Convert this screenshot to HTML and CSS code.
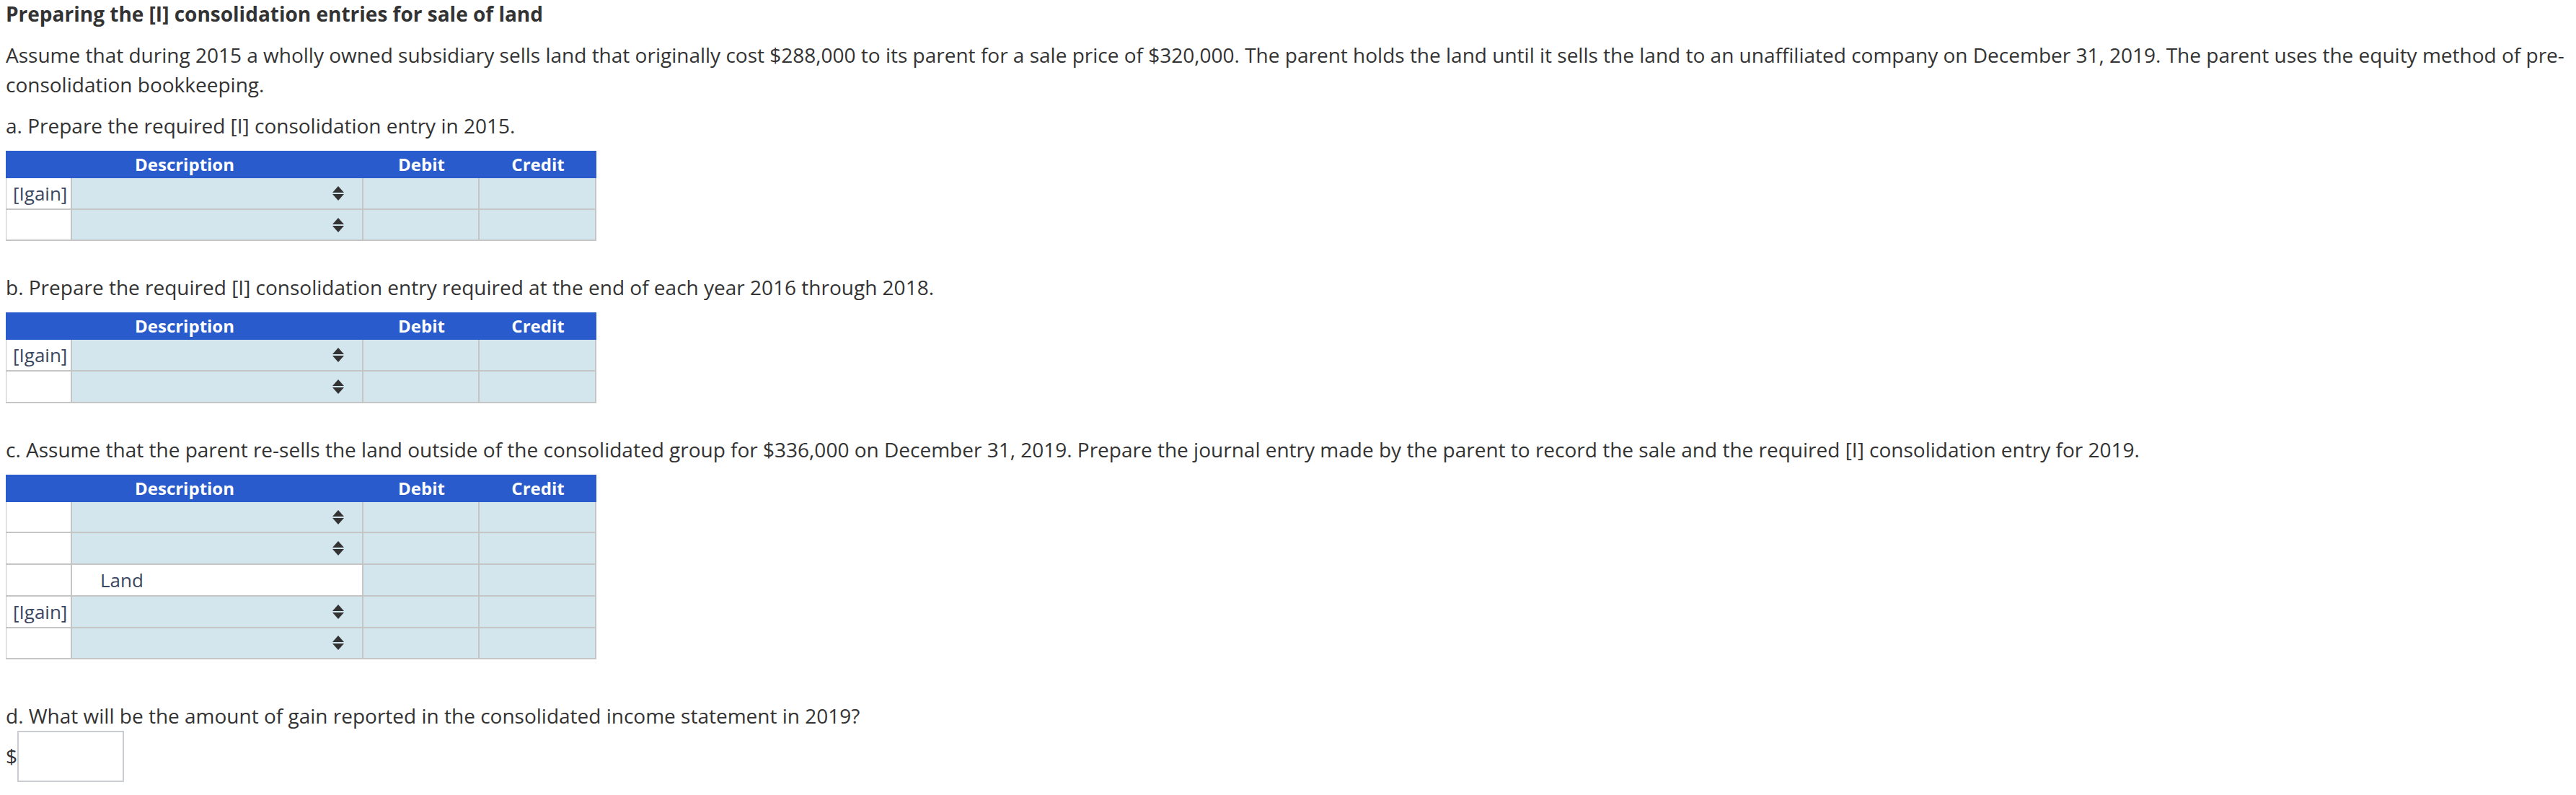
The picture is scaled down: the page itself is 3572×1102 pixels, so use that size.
FILE: index.html
```html
<!DOCTYPE html>
<html lang="en">
<head>
<meta charset="utf-8">
<title>Preparing the [I] consolidation entries for sale of land</title>
<link rel="stylesheet" href="styles.css">
</head>
<body>
<div class="page">
  <h1 class="title">Preparing the [I] consolidation entries for sale of land</h1>
  <p class="intro">Assume that during 2015 a wholly owned subsidiary sells land that originally cost $288,000 to its parent for a sale price of $320,000. The parent holds the land until it sells the land to an unaffiliated company on December 31, 2019. The parent uses the equity method of pre-consolidation bookkeeping.</p>

  <p class="q q-a">a. Prepare the required [I] consolidation entry in 2015.</p>
  <div class="journal" role="table">
    <div class="hd hd-desc">Description</div><div class="hd">Debit</div><div class="hd">Credit</div>
    <div class="cell tag">[Igain]</div><div class="cell desc"><svg class="arrows" viewBox="0 0 16 20" width="16" height="20"><polygon points="8,0 16,9 0,9"/><polygon points="0,11 16,11 8,20"/></svg></div><div class="cell num"></div><div class="cell num"></div>
    <div class="cell tag"></div><div class="cell desc"><svg class="arrows" viewBox="0 0 16 20" width="16" height="20"><polygon points="8,0 16,9 0,9"/><polygon points="0,11 16,11 8,20"/></svg></div><div class="cell num"></div><div class="cell num"></div>
  </div>

  <p class="q q-b">b. Prepare the required [I] consolidation entry required at the end of each year 2016 through 2018.</p>
  <div class="journal" role="table">
    <div class="hd hd-desc">Description</div><div class="hd">Debit</div><div class="hd">Credit</div>
    <div class="cell tag">[Igain]</div><div class="cell desc"><svg class="arrows" viewBox="0 0 16 20" width="16" height="20"><polygon points="8,0 16,9 0,9"/><polygon points="0,11 16,11 8,20"/></svg></div><div class="cell num"></div><div class="cell num"></div>
    <div class="cell tag"></div><div class="cell desc"><svg class="arrows" viewBox="0 0 16 20" width="16" height="20"><polygon points="8,0 16,9 0,9"/><polygon points="0,11 16,11 8,20"/></svg></div><div class="cell num"></div><div class="cell num"></div>
  </div>

  <p class="q q-c">c. Assume that the parent re-sells the land outside of the consolidated group for $336,000 on December 31, 2019. Prepare the journal entry made by the parent to record the sale and the required [I] consolidation entry for 2019.</p>
  <div class="journal" role="table">
    <div class="hd hd-desc">Description</div><div class="hd">Debit</div><div class="hd">Credit</div>
    <div class="cell tag"></div><div class="cell desc"><svg class="arrows" viewBox="0 0 16 20" width="16" height="20"><polygon points="8,0 16,9 0,9"/><polygon points="0,11 16,11 8,20"/></svg></div><div class="cell num"></div><div class="cell num"></div>
    <div class="cell tag"></div><div class="cell desc"><svg class="arrows" viewBox="0 0 16 20" width="16" height="20"><polygon points="8,0 16,9 0,9"/><polygon points="0,11 16,11 8,20"/></svg></div><div class="cell num"></div><div class="cell num"></div>
    <div class="cell tag"></div><div class="cell desc fixed">Land</div><div class="cell num"></div><div class="cell num"></div>
    <div class="cell tag">[Igain]</div><div class="cell desc"><svg class="arrows" viewBox="0 0 16 20" width="16" height="20"><polygon points="8,0 16,9 0,9"/><polygon points="0,11 16,11 8,20"/></svg></div><div class="cell num"></div><div class="cell num"></div>
    <div class="cell tag"></div><div class="cell desc"><svg class="arrows" viewBox="0 0 16 20" width="16" height="20"><polygon points="8,0 16,9 0,9"/><polygon points="0,11 16,11 8,20"/></svg></div><div class="cell num"></div><div class="cell num"></div>
  </div>

  <p class="q q-d">d. What will be the amount of gain reported in the consolidated income statement in 2019?</p>
  <div class="answer"><span class="dollar">$</span><span class="box"></span></div>
</div>
</body>
</html>
```
FILE: styles.css
```css
html, body {
  margin: 0;
  padding: 0;
  background: #ffffff;
}
body {
  font-family: "Open Sans", "Noto Sans", sans-serif;
  color: #333333;
  font-size: 28px;
}
.page {
  padding: 0 8px;
}
.title {
  margin: 0;
  font-size: 28px;
  font-weight: 700;
  line-height: 38px;
  color: #333333;
}
.intro {
  margin: 18px 0 0;
  line-height: 41px;
}
.q {
  margin: 0;
  line-height: 41px;
}
.q-a { margin-top: 16px; }
.q-b { margin-top: 44px; }
.q-c { margin-top: 44px; }
.q-d { margin-top: 58px; }

.journal {
  display: grid;
  grid-template-columns: 92px 404px 161px 162px;
  grid-auto-rows: 43.7px;
  grid-template-rows: 38px;
  width: 819px;
  margin-top: 14px;
}
.hd {
  background: #2a5bcc;
  color: #ffffff;
  font-weight: 700;
  font-size: 24px;
  line-height: 38px;
  height: 38px;
  text-align: center;
}
.hd-desc {
  grid-column: span 2;
}
.cell {
  box-sizing: border-box;
  background: #d3e6ee;
  border-right: 2px solid #c5c5c5;
  border-bottom: 2px solid #c5c5c5;
  display: flex;
  align-items: center;
}
.tag {
  background: #ffffff;
  border-left: 1px solid #c5c5c5;
  padding-left: 9px;
  color: #3a465f;
  font-size: 26px;
  white-space: nowrap;
}
.desc {
  justify-content: flex-end;
  padding-right: 25px;
}
.desc.fixed {
  background: #ffffff;
  justify-content: flex-start;
  padding-left: 39px;
  padding-right: 0;
  color: #3a465f;
  font-size: 26px;
}
.arrows {
  fill: #333333;
  display: block;
}
.answer {
  display: flex;
  align-items: center;
}
.dollar {
  width: 16px;
  line-height: 41px;
  color: #333333;
}
.box {
  display: block;
  box-sizing: border-box;
  width: 148px;
  height: 71px;
  border: 2px solid #c9ccd1;
  background: #ffffff;
}
```
